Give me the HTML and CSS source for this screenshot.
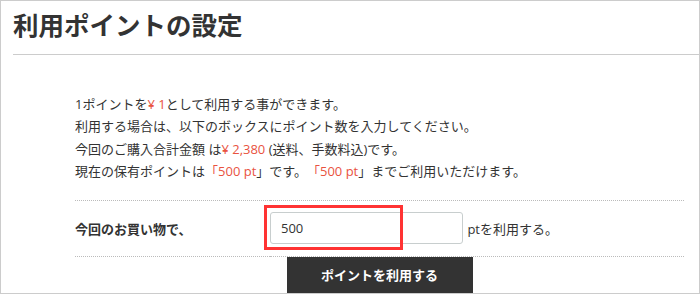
FILE: index.html
```html
<!DOCTYPE html>
<html lang="ja">

<head>
    <meta charset="UTF-8">
    <title>利用ポイントの設定</title>
    <link rel="stylesheet" href="styles.css">
</head>

<body>

    <div class="frame">
        <h2 class="page-title">利用ポイントの設定</h2>

        <div class="point-body">
            <!-- ポイント説明 -->
            <p class="point-note">
                1ポイントを<span class="red">¥ 1</span>として利用する事ができます。<br>
                利用する場合は、以下のボックスにポイント数を入力してください。<br>
                今回のご購入合計金額 は<span class="red">¥ 2,380</span> (送料、手数料込)です。<br>
                現在の保有ポイントは<span class="red">「500 pt</span>」です。<span class="red">「500 pt</span>」までご利用いただけます。
            </p>

            <!-- 入力欄 -->
            <table class="point-table">
                <tr>
                    <th>今回のお買い物で、</th>
                    <td>
                        <span class="input-wrap">
                            <input type="text" id="usePoint" value="500">
                            <span class="mark"></span>
                        </span>
                        <span class="unit">ptを利用する。</span>
                    </td>
                </tr>
            </table>

            <div class="btn-area">
                <button class="btn-use" type="button">ポイントを利用する</button>
            </div>
        </div>
    </div>

</body>

</html>
```

FILE: styles.css
```css
body {
    margin: 0;
    padding: 0;
    background-color: #fff;
    font-family: "Open Sans", "Noto Sans CJK JP", sans-serif;
    color: #333;
    text-spacing-trim: space-all;
}

.frame {
    box-sizing: border-box;
    width: 700px;
    height: 294px;
    border: 1px solid #ccc;
    overflow: hidden;
}

.page-title {
    margin: 0 0 0 12px;
    padding: 6px 0 0 0;
    height: 47px;
    font-family: "Noto Sans CJK JP", sans-serif;
    font-size: 25.5px;
    font-weight: bold;
    line-height: 34px;
    color: #333;
    border-bottom: 1px solid #ccc;
}

.point-body {
    padding: 0 15px 0 74px;
}

.point-note {
    margin: 38px 0 0 0;
    font-size: 13px;
    line-height: 22.4px;
}

.red {
    color: #e9533f;
}

/* 入力欄のテーブル */
.point-table {
    width: 100%;
    margin-top: 17px;
    border-collapse: collapse;
    font-size: 13px;
}

.point-table th,
.point-table td {
    height: 55px;
    padding: 0;
    border-top: 1px dotted #bbb;
    border-bottom: 1px dotted #bbb;
    vertical-align: middle;
    text-align: left;
}

.point-table th {
    width: 195px;
    font-weight: bold;
}

.input-wrap {
    position: relative;
    display: inline-block;
    vertical-align: middle;
}

.input-wrap input {
    box-sizing: border-box;
    display: block;
    width: 193px;
    height: 32px;
    padding: 0 10px;
    border: 1px solid #c8cece;
    border-radius: 3px;
    font-family: inherit;
    font-size: 13px;
    color: #333;
}

/* 赤枠の注記 */
.mark {
    position: absolute;
    left: -6px;
    top: -7px;
    width: 139px;
    height: 45px;
    box-sizing: border-box;
    border: 3px solid #ff3333;
}

.unit {
    vertical-align: middle;
    margin-left: 1px;
}

.btn-area {
    text-align: center;
}

.btn-use {
    width: 186px;
    height: 40px;
    border: none;
    background-color: #333;
    color: #fff;
    font-family: inherit;
    font-size: 13px;
    font-weight: bold;
    padding: 0 0 4px 0;
    cursor: pointer;
}
```
